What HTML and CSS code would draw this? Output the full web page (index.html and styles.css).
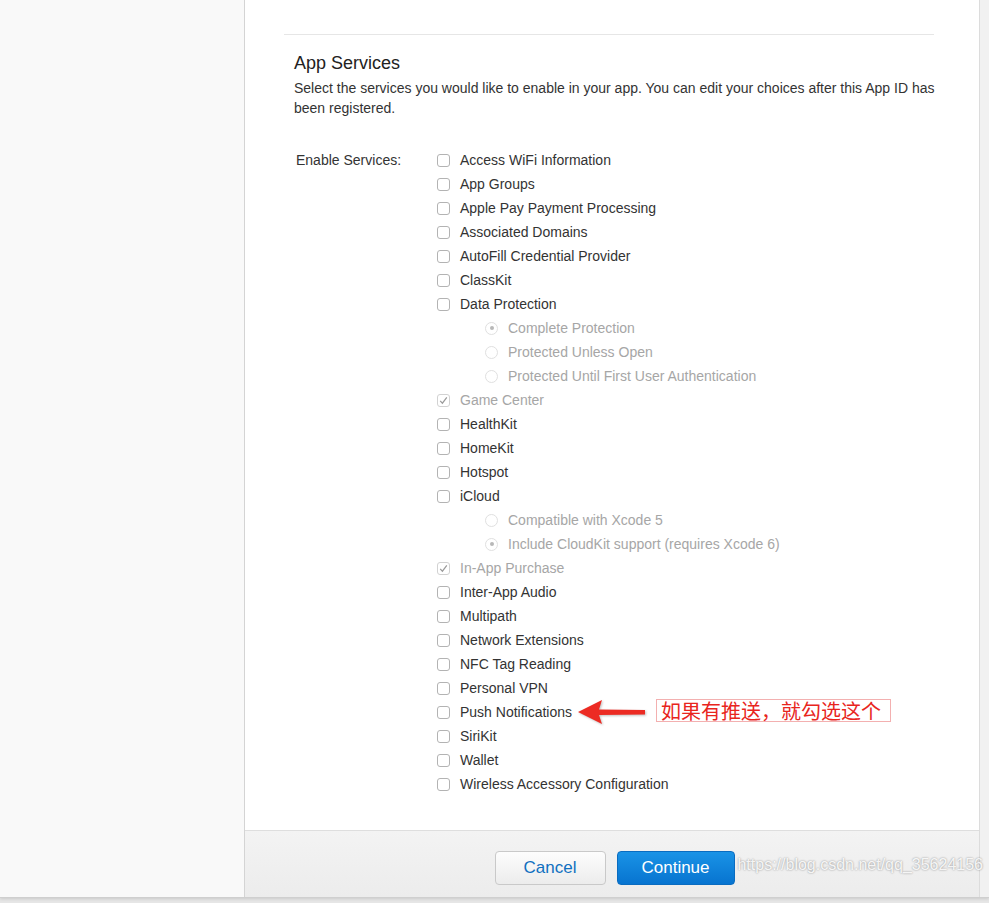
FILE: index.html
```html
<!DOCTYPE html>
<html lang="en">
<head>
  <meta charset="UTF-8" />
  <title>Register App ID - App Services</title>
  <link rel="stylesheet" href="styles.css">
</head>
<body>
  <div class="page">
    <!-- Left sidebar -->
    <aside class="sidebar"></aside>

    <!-- Main panel -->
    <main class="main">
      <section class="services">
        <h2>App Services</h2>
        <p class="intro">Select the services you would like to enable in your app. You can edit your choices after this App ID has been registered.</p>

        <div class="form-row">
          <div class="form-label">Enable Services:</div>
          <ul class="service-list">
            <li class="item"><span class="box"></span>Access WiFi Information</li>
            <li class="item"><span class="box"></span>App Groups</li>
            <li class="item"><span class="box"></span>Apple Pay Payment Processing</li>
            <li class="item"><span class="box"></span>Associated Domains</li>
            <li class="item"><span class="box"></span>AutoFill Credential Provider</li>
            <li class="item"><span class="box"></span>ClassKit</li>
            <li class="item"><span class="box"></span>Data Protection</li>
            <li class="item sub disabled"><span class="radio on"></span>Complete Protection</li>
            <li class="item sub disabled"><span class="radio"></span>Protected Unless Open</li>
            <li class="item sub disabled"><span class="radio"></span>Protected Until First User Authentication</li>
            <li class="item disabled">
              <span class="box checked">
                <svg width="11" height="11" viewBox="0 0 11 11"><path d="M2.2 5.8 L4.4 8.2 L8.8 2.4" fill="none" stroke="#9a9a9a" stroke-width="1.2"/></svg>
              </span>Game Center
            </li>
            <li class="item"><span class="box"></span>HealthKit</li>
            <li class="item"><span class="box"></span>HomeKit</li>
            <li class="item"><span class="box"></span>Hotspot</li>
            <li class="item"><span class="box"></span>iCloud</li>
            <li class="item sub disabled"><span class="radio"></span>Compatible with Xcode 5</li>
            <li class="item sub disabled"><span class="radio on"></span>Include CloudKit support (requires Xcode 6)</li>
            <li class="item disabled">
              <span class="box checked">
                <svg width="11" height="11" viewBox="0 0 11 11"><path d="M2.2 5.8 L4.4 8.2 L8.8 2.4" fill="none" stroke="#9a9a9a" stroke-width="1.2"/></svg>
              </span>In-App Purchase
            </li>
            <li class="item"><span class="box"></span>Inter-App Audio</li>
            <li class="item"><span class="box"></span>Multipath</li>
            <li class="item"><span class="box"></span>Network Extensions</li>
            <li class="item"><span class="box"></span>NFC Tag Reading</li>
            <li class="item"><span class="box"></span>Personal VPN</li>
            <li class="item note-row">
              <span class="box"></span>Push Notifications
              <!-- screenshot annotation -->
              <svg class="arrow" width="72" height="30" viewBox="0 0 72 30">
                <path d="M2 15 L26 3 L23 12.5 L69 13 L69 17.5 L23 18 L26 27 Z" fill="#ec2b23"/>
              </svg>
              <span class="note">如果有推送，就勾选这个</span>
            </li>
            <li class="item"><span class="box"></span>SiriKit</li>
            <li class="item"><span class="box"></span>Wallet</li>
            <li class="item"><span class="box"></span>Wireless Accessory Configuration</li>
          </ul>
        </div>
      </section>

      <!-- Footer buttons -->
      <div class="footer">
        <button class="btn btn-cancel">Cancel</button>
        <button class="btn btn-continue">Continue</button>
        <span class="watermark">https://blog.csdn.net/qq_35624156</span>
      </div>
    </main>

    <div class="gutter"></div>
  </div>
</body>
</html>
```

FILE: styles.css
```css
/* ====== Basic Page Setup ====== */
html, body {
  margin: 0;
  padding: 0;
}
body {
  height: 903px;
  overflow: hidden;
  background: #e6e6e6;
  font-family: "Liberation Sans", Arial, "Noto Sans CJK SC", sans-serif;
  color: #333;
}

.page {
  display: flex;
  height: 897px;
  border-bottom: 1px solid #cfcfcf;
  box-shadow: 0 1px 3px rgba(0,0,0,0.12);
}

/* ====== Sidebar / gutter ====== */
.sidebar {
  width: 244px;
  flex-shrink: 0;
  background: #f9f9f9;
  border-right: 1px solid #d4d4d4;
}
.gutter {
  flex: 1;
  background: #f1f1f1;
  border-left: 1px solid #dcdcdc;
}

/* ====== Main panel ====== */
.main {
  width: 734px;
  flex-shrink: 0;
  background: #fff;
  display: flex;
  flex-direction: column;
  padding-top: 34px;
  box-sizing: border-box;
}

.services {
  margin: 0 45px 0 39px;
  padding: 0 10px;
  border-top: 1px solid #e6e6e6;
}
.services h2 {
  margin: 17px 0 4px;
  font-size: 18px;
  line-height: 22px;
  font-weight: normal;
  color: #222;
}
.intro {
  margin: 0 -18px 0 0;
  font-size: 14px;
  line-height: 20px;
  color: #333;
}

/* ====== Services form ====== */
.form-row {
  display: flex;
  margin-top: 30px;
  font-size: 14px;
}
.form-label {
  width: 141px;
  padding-left: 2px;
  line-height: 24px;
}
.service-list {
  list-style: none;
  margin: 0;
  padding: 0;
}
.item {
  display: flex;
  align-items: center;
  height: 24px;
  white-space: nowrap;
}
.item.sub {
  padding-left: 48px;
}
.item.disabled {
  color: #a6a6a6;
}

.box {
  width: 13px;
  height: 13px;
  box-sizing: border-box;
  border: 1px solid #b3b3b3;
  border-radius: 3px;
  background: #fff;
  margin-right: 10px;
  display: flex;
  align-items: center;
  justify-content: center;
}
.box.checked {
  border-color: #d2d2d2;
}
.box svg {
  display: block;
}

.radio {
  width: 13px;
  height: 13px;
  box-sizing: border-box;
  border: 1px solid #e0e0e0;
  border-radius: 50%;
  margin-right: 10px;
  display: flex;
  align-items: center;
  justify-content: center;
}
.radio.on::after {
  content: "";
  width: 4px;
  height: 4px;
  border-radius: 50%;
  background: #b8b8b8;
}

/* ====== Annotation ====== */
.note-row {
  position: relative;
}
.arrow {
  position: absolute;
  left: 139px;
  top: -3px;
  filter: drop-shadow(1px 1px 1px rgba(0,0,0,0.25));
}
.note {
  position: absolute;
  left: 219px;
  top: -1px;
  height: 21px;
  padding: 0 9px 0 4px;
  border: 1px solid #f3b0b0;
  color: #e8251d;
  font-size: 20px;
  line-height: 21px;
  font-family: "Noto Sans CJK SC", sans-serif;
}

/* ====== Footer ====== */
.footer {
  position: relative;
  margin-top: auto;
  height: 67px;
  box-sizing: border-box;
  border-top: 1px solid #dedede;
  background: linear-gradient(#f3f3f3, #ececec);
  display: flex;
  justify-content: center;
  align-items: flex-start;
  gap: 11px;
  padding-top: 20px;
  padding-left: 5px;
}
.btn {
  height: 34px;
  border-radius: 4px;
  font-family: inherit;
  font-size: 17px;
  padding: 0;
}
.btn-cancel {
  width: 111px;
  border: 1px solid #c9c9c9;
  background: linear-gradient(#fdfdfd, #ececec);
  color: #1070c0;
}
.btn-continue {
  width: 118px;
  border: 1px solid #0a6cc0;
  background: linear-gradient(#1a93e6, #0774d0);
  color: #fff;
}
.watermark {
  position: absolute;
  right: -4px;
  top: 25px;
  font-size: 16px;
  color: rgba(255,255,255,0.9);
  text-shadow: 0 0 2px rgba(0,0,0,0.45);
  white-space: nowrap;
}
```
